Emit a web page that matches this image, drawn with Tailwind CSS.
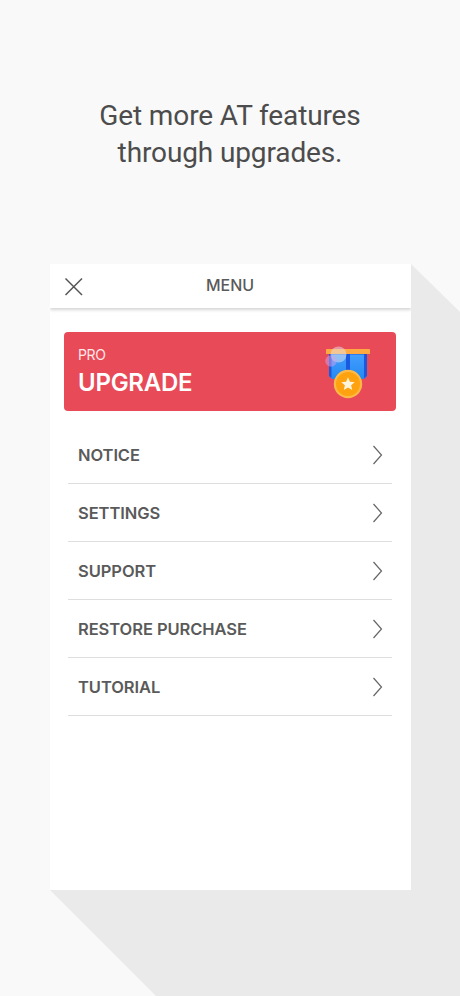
<!DOCTYPE html>
<html lang="en">
<head>
<meta charset="utf-8">
<title>Menu</title>
<script src="https://cdn.jsdelivr.net/npm/@tailwindcss/browser@4"></script>
</head>
<body class="bg-[#f9f9f9]">
<div class="relative isolate w-[460px] h-[996px] overflow-hidden bg-[#f9f9f9] font-['Inter','Liberation_Sans',sans-serif]">
  <!-- long diagonal shadow -->
  <svg class="absolute inset-0 -z-10" width="460" height="996" viewBox="0 0 460 996"><path d="M411 264L460 312V996H156L50 890Z" fill="#eaeaea"/></svg>
  <h1 class="pt-[97px] h-[264px] text-center text-[28px] leading-[37px] text-[#4c4c4c] font-['Roboto','Open_Sans',sans-serif] font-normal">
    <span class="block tracking-[-0.12px]">Get more AT features</span>
    <span class="block tracking-[-0.12px]">through upgrades.</span>
  </h1>
  <main class="ml-[50px] w-[361px] h-[626px] bg-white overflow-hidden">
    <header class="grid grid-cols-[1fr_auto_1fr] items-center h-11 px-[14px] bg-white shadow-[0_2px_3px_rgba(0,0,0,0.17)]">
      <svg width="20" height="20" viewBox="0 0 20 20" class="mt-[1px]" fill="none" stroke="#555" stroke-width="1.5"><path d="M1.500 1.500L18 18M18 1.500L1.500 18"/></svg>
      <span class="text-[16px] leading-5 font-medium text-[#5a5a5a] -mt-0.5 -ml-px tracking-[-0.1px]">MENU</span>
    </header>
    <section class="mt-6 ml-[14px] w-[332px] h-[79px] rounded bg-[#e84a58] text-white flex justify-between pl-[14px] pr-[22px]">
      <div class="pt-[14px]">
        <div class="text-[14px] leading-[18px] text-[#ffe7e8] tracking-[-0.4px]">PRO</div>
        <div class="text-[24px] leading-[30px] mt-1 font-semibold tracking-[-0.25px]">UPGRADE</div>
      </div>
      <svg class="mt-3" width="52" height="58" viewBox="322 344 52 58">
        <defs><linearGradient id="ribbon" x1="0" y1="0" x2="0" y2="1"><stop offset="0" stop-color="#469fff"/><stop offset="1" stop-color="#2389f2"/></linearGradient></defs>
        <path d="M329 353H367V376L364 379H332L329 376Z" fill="url(#ribbon)"/>
        <path d="M329 353H331.500V378L329 376ZM346 353H350V378H346ZM364 353H367V376L364 378.500Z" fill="#1a58df"/>
        <path d="M329 354.500H367" stroke="#1748d5" stroke-opacity=".4"/>
        <rect x="326" y="349" width="44" height="5" rx=".5" fill="#ffa940"/>
        <circle cx="338.500" cy="354.500" r="8" fill="#e8e4ec" fill-opacity=".5"/>
        <circle cx="331" cy="361" r="5.800" fill="#d0a0e8" fill-opacity=".5"/>
        <circle cx="348" cy="384" r="14.200" fill="#ffb946"/>
        <circle cx="348" cy="384" r="12" fill="#ffa20f"/>
        <path d="M348 377.300L349.900 381.700L354.700 382.200L351.100 385.300L352.200 390L348 387.500L343.800 390L344.900 385.300L341.300 382.200L346.100 381.700Z" fill="#fff5dc"/>
      </svg>
    </section>
    <nav class="mt-[15px] ml-[18px] w-[324px] text-[16.5px] font-semibold text-[#5a5a5a] tracking-[-0.07px]">
      <a class="flex h-[58px] items-center justify-between border-b border-[#dedede] pl-[10px] pr-[9px]"><span class="pt-px">NOTICE</span><svg width="11" height="20" viewBox="0 0 11 20" fill="none" stroke="#666" stroke-width="1.2"><path d="M1.500 1L9.500 10L1.500 19"/></svg></a>
      <a class="flex h-[58px] items-center justify-between border-b border-[#dedede] pl-[10px] pr-[9px]"><span class="pt-px">SETTINGS</span><svg width="11" height="20" viewBox="0 0 11 20" fill="none" stroke="#666" stroke-width="1.2"><path d="M1.500 1L9.500 10L1.500 19"/></svg></a>
      <a class="flex h-[58px] items-center justify-between border-b border-[#dedede] pl-[10px] pr-[9px]"><span class="pt-px">SUPPORT</span><svg width="11" height="20" viewBox="0 0 11 20" fill="none" stroke="#666" stroke-width="1.2"><path d="M1.500 1L9.500 10L1.500 19"/></svg></a>
      <a class="flex h-[58px] items-center justify-between border-b border-[#dedede] pl-[10px] pr-[9px]"><span class="pt-px">RESTORE PURCHASE</span><svg width="11" height="20" viewBox="0 0 11 20" fill="none" stroke="#666" stroke-width="1.2"><path d="M1.500 1L9.500 10L1.500 19"/></svg></a>
      <a class="flex h-[58px] items-center justify-between border-b border-[#dedede] pl-[10px] pr-[9px]"><span class="pt-px">TUTORIAL</span><svg width="11" height="20" viewBox="0 0 11 20" fill="none" stroke="#666" stroke-width="1.2"><path d="M1.500 1L9.500 10L1.500 19"/></svg></a>
    </nav>
  </main>
</div>
</body>
</html>
